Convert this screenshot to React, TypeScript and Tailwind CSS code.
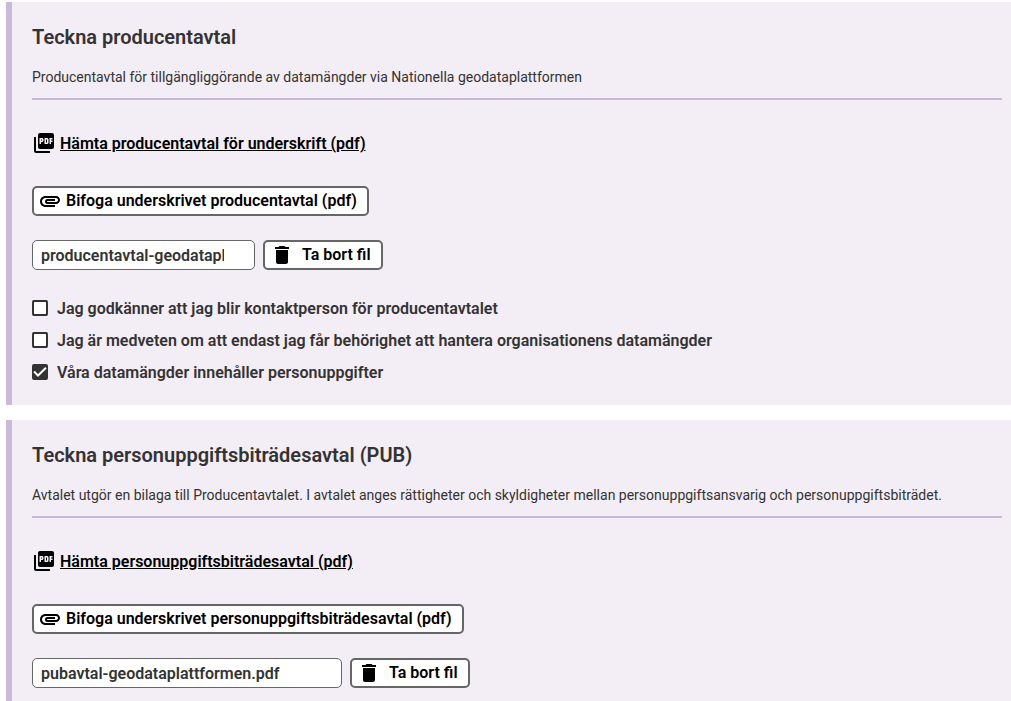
import React, { useState } from "react";
import { MdAttachment, MdDelete, MdPictureAsPdf } from "react-icons/md";

interface AgreementSectionProps {
  title: string;
  description: string;
  downloadLabel: string;
  uploadLabel: string;
  fileName: string;
  inputClassName: string;
  children?: React.ReactNode;
}

const AgreementSection: React.FC<AgreementSectionProps> = ({
  title,
  description,
  downloadLabel,
  uploadLabel,
  fileName,
  inputClassName,
  children,
}) => {
  const [file, setFile] = useState(fileName);

  return (
    <section className="border-l-6 border-[#cbb9da] bg-[#f3edf5] pl-5 pr-[9px] pt-[23px] pb-[13px]">
      <h2 className="text-xl leading-6 font-semibold">{title}</h2>
      <p className="mt-[18px] border-b-2 border-[#cbb9da] pb-[11px] text-sm leading-5 font-normal">
        {description}
      </p>

      <div className="mt-[30px] flex items-center gap-1 text-black">
        <MdPictureAsPdf size={24} aria-hidden="true" />
        <a href="#" className="pt-[2px] leading-6 underline">
          {downloadLabel}
        </a>
      </div>

      <button
        type="button"
        className="mt-[30px] flex h-[30px] items-center gap-1 rounded-[5px] border-2 border-[#666] bg-white pl-1 pr-[10px] text-black"
      >
        <MdAttachment size={24} aria-hidden="true" />
        {uploadLabel}
      </button>

      <div className="mt-6 flex gap-2">
        <input
          type="text"
          aria-label="Bifogad fil"
          value={file}
          readOnly
          className={`h-[30px] rounded-[5px] border border-[#666] bg-white pl-2 ${inputClassName}`}
        />
        <button
          type="button"
          onClick={() => setFile("")}
          className="flex h-[30px] items-center gap-2 rounded-[5px] border-2 border-[#666] bg-white pl-[5px] pr-[10px] text-black"
        >
          <MdDelete size={24} aria-hidden="true" />
          Ta bort fil
        </button>
      </div>

      {children}
    </section>
  );
};

interface CheckboxProps {
  id: string;
  label: string;
  defaultChecked?: boolean;
}

const Checkbox: React.FC<CheckboxProps> = ({ id, label, defaultChecked }) => (
  <div className="flex items-start">
    <span className="mt-[3px] grid">
      <input
        type="checkbox"
        id={id}
        defaultChecked={defaultChecked}
        className="peer col-start-1 row-start-1 size-4 appearance-none rounded-[2px] border-2 border-[#333] bg-white checked:bg-[#333]"
      />
      <svg
        viewBox="0 0 16 16"
        className="pointer-events-none invisible col-start-1 row-start-1 size-4 peer-checked:visible"
        fill="none"
        stroke="white"
        strokeWidth="2"
        aria-hidden="true"
      >
        <path d="M2 7.5 L6 11.5 L14 3.8" />
      </svg>
    </span>
    <label htmlFor={id} className="pl-[9px] leading-6">
      {label}
    </label>
  </div>
);

const App: React.FC = () => {
  return (
    <main className="flex flex-col gap-[15px] pl-[6px] pt-[2px] font-[Roboto,sans-serif] text-base font-semibold text-[#333]">
      <AgreementSection
        title="Teckna producentavtal"
        description="Producentavtal för tillgängliggörande av datamängder via Nationella geodataplattformen"
        downloadLabel="Hämta producentavtal för underskrift (pdf)"
        uploadLabel="Bifoga underskrivet producentavtal (pdf)"
        fileName="producentavtal-geodataplattformen.pdf"
        inputClassName="w-[223px] pr-[30px]"
      >
        <div className="mt-[27px] mb-[7px] flex flex-col gap-2">
          <Checkbox
            id="contact"
            label="Jag godkänner att jag blir kontaktperson för producentavtalet"
          />
          <Checkbox
            id="permission"
            label="Jag är medveten om att endast jag får behörighet att hantera organisationens datamängder"
          />
          <Checkbox
            id="personal-data"
            label="Våra datamängder innehåller personuppgifter"
            defaultChecked
          />
        </div>
      </AgreementSection>

      <AgreementSection
        title="Teckna personuppgiftsbiträdesavtal (PUB)"
        description="Avtalet utgör en bilaga till Producentavtalet. I avtalet anges rättigheter och skyldigheter mellan personuppgiftsansvarig och personuppgiftsbiträdet."
        downloadLabel="Hämta personuppgiftsbiträdesavtal (pdf)"
        uploadLabel="Bifoga underskrivet personuppgiftsbiträdesavtal (pdf)"
        fileName="pubavtal-geodataplattformen.pdf"
        inputClassName="w-[310px] pr-[30px]"
      />
    </main>
  );
};

export default App;
